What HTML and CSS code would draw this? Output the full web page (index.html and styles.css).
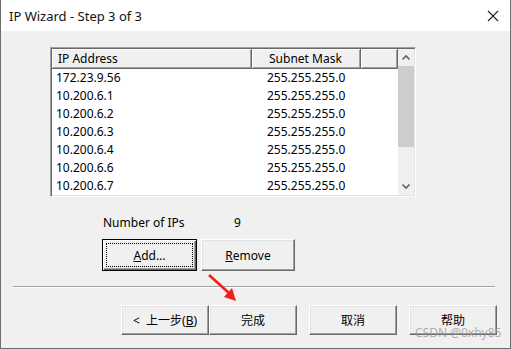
FILE: index.html
```html
<!doctype html>
<html lang="zh">
  <head>
    <meta charset="UTF-8" />
    <title>IP Wizard</title>
    <link rel="stylesheet" href="styles.css">
  </head>
  <body>
    <div class="window">
      <div class="titlebar">
        <span class="title">IP Wizard - Step 3 of 3</span>
        <svg class="close" width="12" height="12" viewBox="0 0 12 12">
          <path d="M1 1L11 11M11 1L1 11" stroke="#222" stroke-width="1.1" fill="none" />
        </svg>
      </div>

      <div class="content">
        <div class="listbox">
          <div class="table">
            <div class="head">
              <div class="hcell col_ip">IP Address</div>
              <div class="hcell col_mask">Subnet Mask</div>
              <div class="hcell col_rest"></div>
            </div>
            <div class="row"><span class="col_ip">172.23.9.56</span><span class="col_mask">255.255.255.0</span></div>
            <div class="row"><span class="col_ip">10.200.6.1</span><span class="col_mask">255.255.255.0</span></div>
            <div class="row"><span class="col_ip">10.200.6.2</span><span class="col_mask">255.255.255.0</span></div>
            <div class="row"><span class="col_ip">10.200.6.3</span><span class="col_mask">255.255.255.0</span></div>
            <div class="row"><span class="col_ip">10.200.6.4</span><span class="col_mask">255.255.255.0</span></div>
            <div class="row"><span class="col_ip">10.200.6.6</span><span class="col_mask">255.255.255.0</span></div>
            <div class="row"><span class="col_ip">10.200.6.7</span><span class="col_mask">255.255.255.0</span></div>
          </div>
          <div class="scrollbar">
            <svg class="arrow" width="16" height="17" viewBox="0 0 16 17">
              <path d="M4.5 10.5L8 7L11.5 10.5" stroke="#606060" stroke-width="1.6" fill="none" />
            </svg>
            <div class="thumb"></div>
            <div class="track"></div>
            <svg class="arrow" width="16" height="17" viewBox="0 0 16 17">
              <path d="M4.5 6.5L8 10L11.5 6.5" stroke="#606060" stroke-width="1.6" fill="none" />
            </svg>
          </div>
        </div>

        <div class="info">
          <span class="info_label">Number of IPs</span>
          <span class="info_value">9</span>
        </div>

        <div class="actions">
          <button class="btn btn_default"><span class="focus"><u>A</u>dd...</span></button>
          <button class="btn"><u>R</u>emove</button>
        </div>

        <div class="separator"></div>

        <div class="footer">
          <button class="btn btn_nav">&lt;&nbsp; 上一步(<u>B</u>)</button>
          <button class="btn btn_nav">完成</button>
          <button class="btn btn_nav btn_gap">取消</button>
          <button class="btn btn_nav btn_gap">帮助</button>
        </div>

        <svg class="pointer" width="34" height="30" viewBox="0 0 34 30">
          <path d="M2 2L22 20" stroke="#f02018" stroke-width="2.6" fill="none" />
          <path d="M17 24L29 28L25 15Z" fill="#f02018" />
        </svg>
        <span class="watermark">CSDN @0xhy85</span>
      </div>
    </div>
  </body>
</html>
```

FILE: styles.css
```css
body {
  margin: 0;
  font-family: "Noto Sans", "Noto Sans CJK SC", sans-serif;
  font-size: 12px;
  color: #000;
}

.window {
  width: 511px;
  height: 349px;
  box-sizing: border-box;
  border: 1px solid #6e6e6e;
  border-top: none;
  display: flex;
  flex-direction: column;
}

.titlebar {
  height: 31px;
  background-color: white;
  display: flex;
  align-items: center;
  justify-content: space-between;
  padding: 0 11px 0 8px;
}

.title {
  font-size: 13px;
  color: #111;
}

.content {
  flex: 1;
  position: relative;
  background-color: #f0f0f0;
  padding-top: 16px;
  display: flex;
  flex-direction: column;
}

/* list view */
.listbox {
  margin-left: 49px;
  width: 366px;
  height: 150px;
  box-sizing: border-box;
  display: flex;
  background-color: white;
  border-top: 1px solid #a0a0a0;
  border-left: 1px solid #a0a0a0;
  border-right: 1px solid #fff;
  border-bottom: 1px solid #fff;
  box-shadow: inset 1px 1px #696969, inset -1px -1px #e3e3e3;
  padding: 1px;
}

.table {
  flex: 1;
  overflow: hidden;
}

.head {
  display: flex;
  height: 20px;
}

.hcell {
  box-sizing: border-box;
  height: 20px;
  line-height: 19px;
  background-color: #f0f0f0;
  border-right: 1px solid #696969;
  border-bottom: 1px solid #696969;
  box-shadow: inset 1px 1px #fff, inset -1px -1px #a0a0a0;
}

.hcell.col_ip {
  padding-left: 6px;
}

.hcell.col_mask {
  padding-left: 17px;
}

.col_ip {
  width: 200px;
  padding-left: 4px;
  box-sizing: border-box;
}

.col_mask {
  width: 109px;
  padding-left: 15px;
  box-sizing: border-box;
}

.col_rest {
  flex: 1;
}

.row {
  display: flex;
  height: 18px;
  line-height: 18px;
}

.scrollbar {
  width: 16px;
  display: flex;
  flex-direction: column;
  background-color: #f0f0f0;
}

.arrow {
  display: block;
}

.thumb {
  height: 81px;
  background-color: #cdcdcd;
}

.track {
  flex: 1;
}

/* count */
.info {
  display: flex;
  margin: 17px 0 0 102px;
  height: 18px;
  line-height: 18px;
}

.info_label {
  width: 131px;
}

/* buttons */
.btn {
  font-family: "Noto Sans", "Noto Sans CJK SC", sans-serif;
  font-size: 12px;
  color: #000;
  background-color: #f0f0f0;
  border: 1px solid;
  border-color: #fff #696969 #696969 #fff;
  box-shadow: inset -1px -1px #a0a0a0, inset 1px 1px #e3e3e3;
  padding: 0;
  margin: 0;
}

.actions {
  display: flex;
  gap: 4px;
  margin: 7px 0 0 101px;
}

.actions .btn {
  width: 95px;
  height: 32px;
}

.actions .btn + .btn {
  width: 94px;
}

.btn_default {
  border: 1px solid #000;
  box-shadow: inset 1px 1px #fff, inset -1px -1px #696969, inset -2px -2px #a0a0a0;
  padding: 3px;
}

.focus {
  display: flex;
  align-items: center;
  justify-content: center;
  height: 100%;
  box-sizing: border-box;
  border: 1px dotted #000;
}

.separator {
  margin: 15px 15px 0 12px;
  border-top: 1px solid #a0a0a0;
  border-bottom: 1px solid #fff;
}

.footer {
  display: flex;
  margin: 17px 0 0 120px;
}

.btn_nav {
  width: 88px;
  height: 30px;
}

.btn_gap {
  margin-left: 12px;
}

.pointer {
  position: absolute;
  left: 206px;
  top: 242px;
}

.watermark {
  position: absolute;
  left: 414px;
  top: 293px;
  font-size: 12px;
  color: rgba(150, 150, 150, 0.75);
}
```
